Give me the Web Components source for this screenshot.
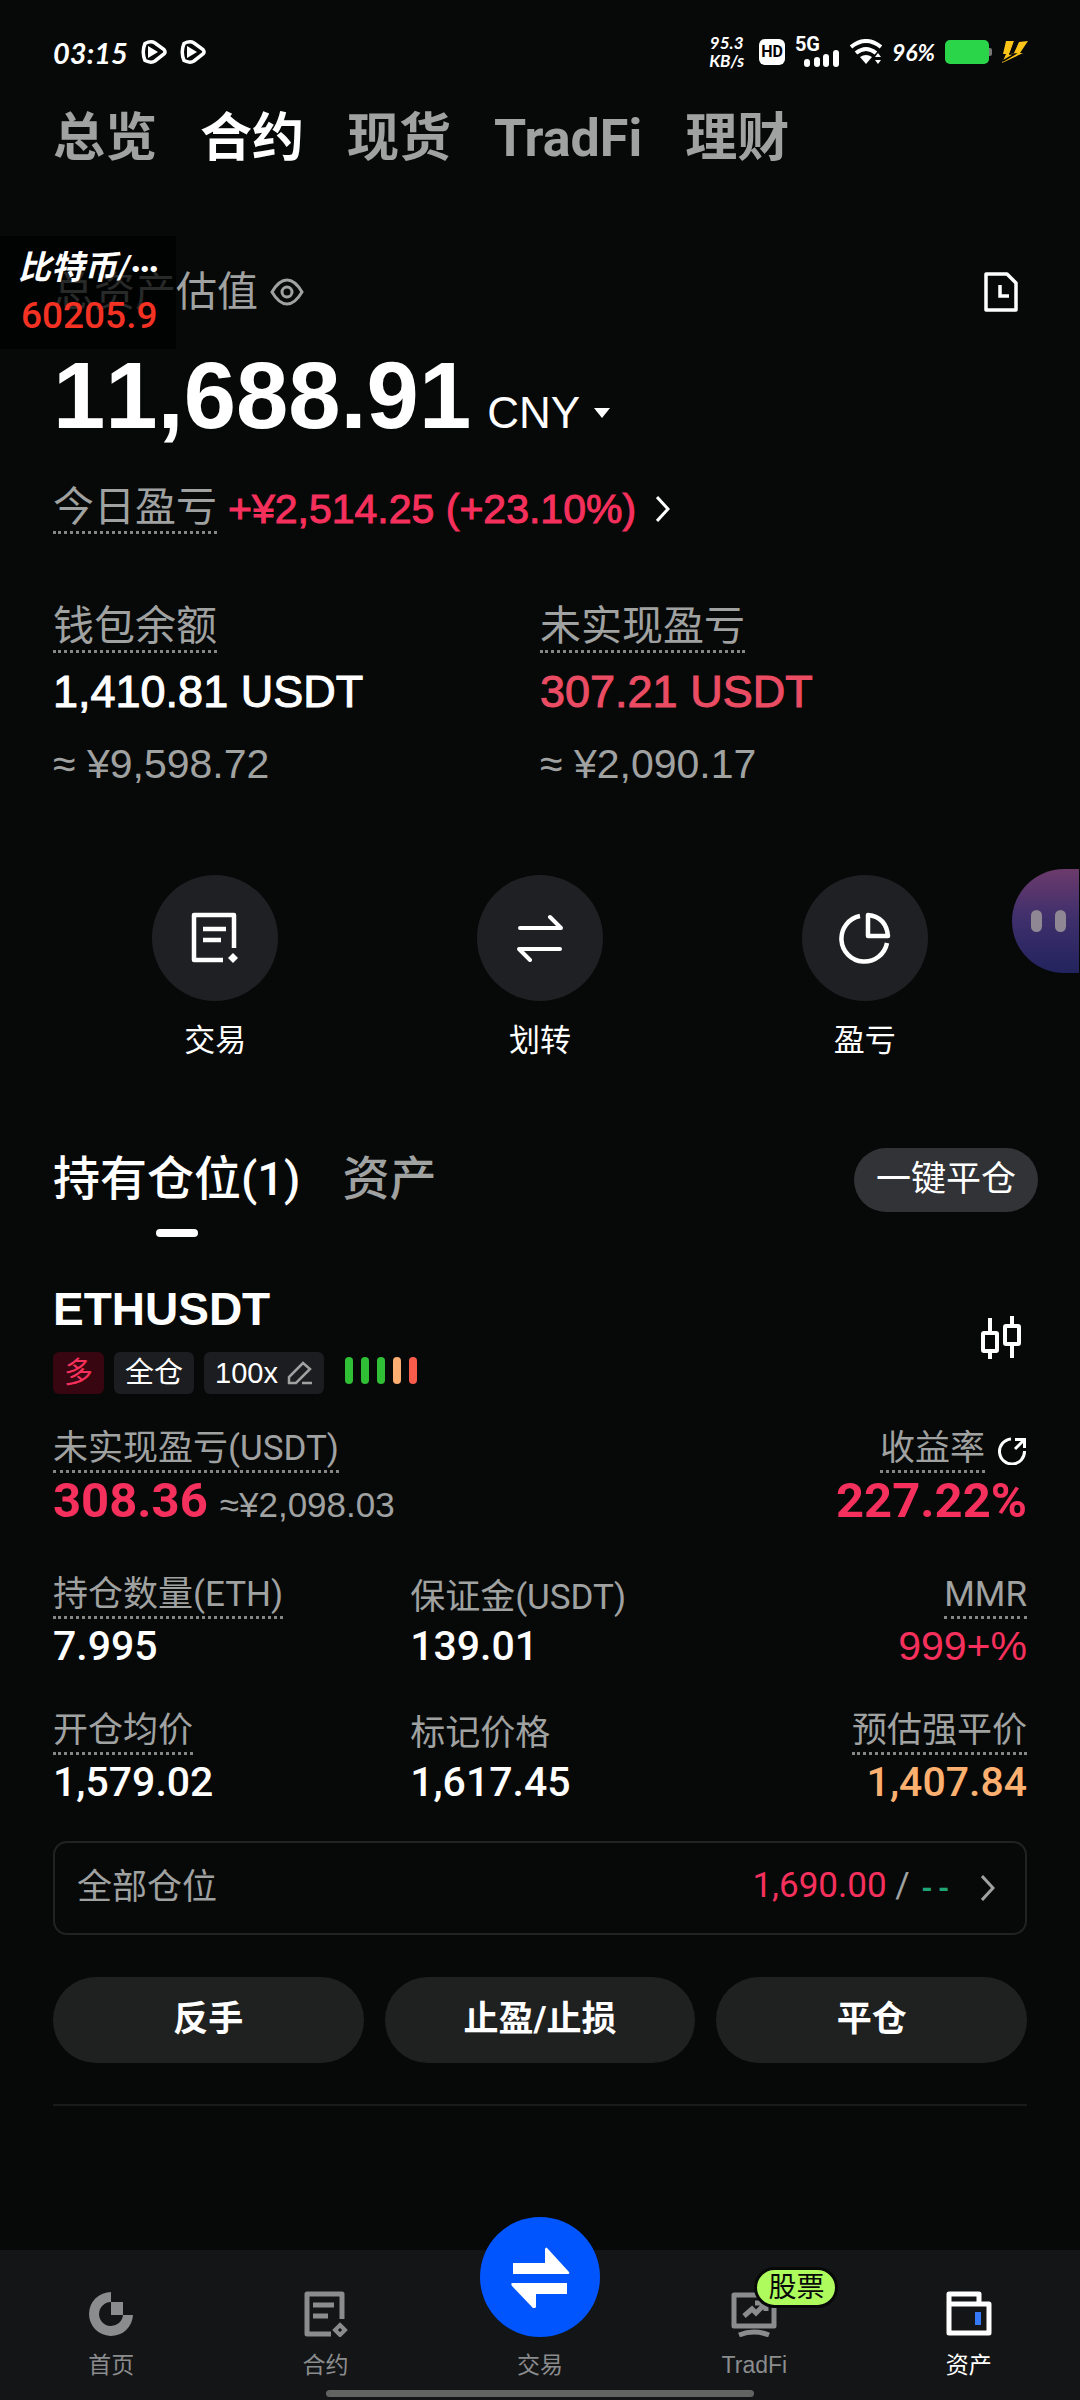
<!DOCTYPE html>
<html lang="zh-CN">
<head>
<meta charset="utf-8">
<meta name="viewport" content="width=device-width, initial-scale=1">
<title>合约资产</title>
<style>
  :root {
    --bg: #070908;
    --text: #fff;
    --muted: #a0a2a2;
    --red: #f6305c;
    --orange: #fbb070;
    --green: #20a577;
    --chip: #1c1d20;
    --gutter: 53px;
    --sans: "Liberation Sans", "Noto Sans CJK SC", sans-serif;
    --round: Roboto, "Noto Sans CJK SC", sans-serif;
    --hand: Lato, "Noto Sans CJK SC", sans-serif;
  }
  body {
    margin: 0;
    min-height: 100vh;
    display: flex;
    flex-direction: column;
    position: relative;
    overflow-x: hidden;
    background: var(--bg);
    color: var(--text);
    font-family: var(--sans);
  }
  main {
    padding: 0 var(--gutter);
  }
  bottom-nav {
    margin-top: auto;
  }
</style>
</head>
<body>
  <status-bar time="03:15" rate="95.3" battery="96%"></status-bar>
  <main>
    <account-tabs></account-tabs>
    <total-assets></total-assets>
    <wallet-balances>
      <balance-item label="钱包余额" value="1,410.81 USDT" approx="≈ ¥9,598.72"></balance-item>
      <balance-item label="未实现盈亏" value="307.21 USDT" approx="≈ ¥2,090.17" loss></balance-item>
    </wallet-balances>
    <quick-actions>
      <quick-action icon="order">交易</quick-action>
      <quick-action icon="transfer">划转</quick-action>
      <quick-action icon="pie">盈亏</quick-action>
    </quick-actions>
    <position-header></position-header>
    <position-card></position-card>
  </main>
  <bottom-nav>
    <nav-item icon="home">首页</nav-item>
    <nav-item icon="contract">合约</nav-item>
    <nav-item icon="swap" primary>交易</nav-item>
    <nav-item icon="screen" badge="股票">TradFi</nav-item>
    <nav-item icon="wallet" active>资产</nav-item>
  </bottom-nav>
  <price-float></price-float>
  <float-ball></float-ball>

<script>
  const ICONS = {
    play: [26, 24, `<path d="M4 3.500Q10 .5 14 3L23 9.500Q25 12 23 14L14 21Q10 23.500 4 20.500Q.5 12 4 3.500Z" fill="none" stroke="currentColor" stroke-width="3.500"/><path d="M7 6 17 12 7 18Z" fill="currentColor"/>`],
    signal: [36, 18, `<g fill="currentColor"><rect y="9" width="6" height="8" rx="3"/><rect x="10" y="7" width="6" height="10" rx="3"/><rect x="19" y="4" width="6" height="13" rx="3"/><rect x="29" width="6" height="17" rx="3"/></g>`],
    wifi: [32, 26, `<g fill="none" stroke="currentColor" stroke-width="4"><path d="M1 8Q16-4 31 8"/><path d="M6 14Q16 6 26 14"/></g><path d="M10 18Q16 14 22 18L16 25Z" fill="currentColor"/><path d="M28 14l3 4h-6zM28 25l3-4h-6z" fill="currentColor"/>`],
    battery: [47, 24, `<path d="M44 8h1q2 0 2 2v4q0 2-2 2h-1z" fill="#777"/><rect width="44" height="24" rx="5" fill="#2bd54a"/>`],
    bolt: [26, 22, `<path d="M4 0h8L8 12h4L17 1l9-1-8 12h3L0 22 4 13H1z" fill="#fcc419"/><path d="M1 20 13 13H7M13 0 8 13" stroke="#070908" stroke-width="1.500" fill="none"/>`],
    eye: [34, 28, `<g fill="none" stroke="currentColor" stroke-width="3"><path d="M2 14Q9 2 17 2T32 14Q25 26 17 26T2 14Z"/><circle cx="17" cy="14" r="5"/></g>`],
    history: [36, 40, `<g fill="none" stroke="currentColor" stroke-width="3.500"><path d="M3 2H24L33 11V38H3Z" stroke-linejoin="round"/><path d="M17 13V24H26"/></g>`],
    caret: [16, 10, `<path d="M0 0H16L8 10Z" fill="currentColor"/>`],
    chevron: [14, 26, `<path d="M1 1 12 13 1 25" fill="none" stroke="currentColor" stroke-width="3"/>`],
    order: [50, 52, `<path d="M33 48H4V3H44V36" fill="none" stroke="currentColor" stroke-width="4.500" stroke-linejoin="round"/><path d="M13 17H36M13 28H31" stroke="currentColor" stroke-width="4.500"/><path d="M43 41 48 46 43 51 38 46Z" fill="currentColor"/>`],
    transfer: [48, 48, `<path d="M4 14H45L34 3M44 35H3L14 46" fill="none" stroke="currentColor" stroke-width="4" stroke-linecap="round" stroke-linejoin="round"/>`],
    pie: [52, 52, `<g fill="none" stroke="currentColor" stroke-width="4.500"><path d="M21 4A23 23 0 1 0 48 31"/><path d="M29 3V24H49Q47 5 29 3Z" stroke-linejoin="round"/></g>`],
    pencil: [26, 26, `<path d="M2 23V17L16 3 23 9 9 23ZM15 23H25" fill="none" stroke="currentColor" stroke-width="2.500"/>`],
    candles: [40, 44, `<g fill="none" stroke="currentColor" stroke-width="4"><rect x="2" y="17" width="14" height="18" rx="1"/><rect x="24" y="10" width="14" height="18" rx="1"/><path d="M9 2V17M9 35V43M31 0V10M31 28V42"/></g>`],
    share: [30, 28, `<g fill="none" stroke="currentColor" stroke-width="3"><path d="M14 2A12.500 12.500 0 1 0 27.500 14"/><path d="M18 12 27 3M18 2.500H27.500V11"/></g>`],
    home: [46, 46, `<path d="M23 1A22 22 0 1 0 45 24H35A12 12 0 1 1 23 11Z" fill="currentColor"/><rect x="23" y="11" width="12" height="13" fill="currentColor"/>`],
    contract: [46, 46, `<path d="M28 43H4V3H39V28" fill="none" stroke="currentColor" stroke-width="5" stroke-linejoin="round"/><path d="M10 14H31M10 25H25" stroke="currentColor" stroke-width="5"/><path d="M37 34 42 39 37 44 32 39Z" fill="none" stroke="currentColor" stroke-width="4"/>`],
    swap: [62, 62, `<path d="M4 17H36V3Q37 0 39 3L60 26Q61 28 59 28H4ZM58 48H27V61Q25 64 23 61L3 40Q1 37 4 37H58Z" fill="#fff"/>`],
    screen: [46, 46, `<g fill="none" stroke="currentColor"><path d="M3 4H43V35H3Z" stroke-width="5" stroke-linejoin="round"/><path d="M13 25 21 18 25 22 35 12M24 12H35V20" stroke-width="5"/><path d="M8 44Q23 38 38 44" stroke-width="5"/></g>`],
    wallet: [46, 46, `<path d="M3 14V3H33V13M3 13H43V42H3Z" fill="none" stroke="currentColor" stroke-width="5" stroke-linejoin="round"/><rect x="29" y="21" width="6" height="13" fill="#3579f6"/>`]
  };

  // Shared by every element: fills an open shadow root and resets controls
  class BaseElement extends HTMLElement {
    constructor() {
      super();
      this._root = this.attachShadow({ mode: 'open' });
    }

    connectedCallback() {
      this._root.innerHTML = `
        <style>
          * { box-sizing: border-box; }
          :host { display: block; box-sizing: border-box; }
          button, a {
            margin: 0;
            padding: 0;
            border: 0;
            background: none;
            color: inherit;
            font: inherit;
            text-decoration: none;
            cursor: pointer;
          }
          h2, p { margin: 0; font-weight: inherit; }
          .dotted { border-bottom: 3px dotted #858787; }
        </style>
        ${this.render()}
      `;
    }

    attr(name) {
      return this.getAttribute(name) || '';
    }
  }

  class AppIcon extends BaseElement {
    render() {
      const [w, h, shape] = ICONS[this.attr('name')];
      return `
        <style>
          :host { flex: none; width: ${w}px; height: ${h}px; }
          svg { display: block; }
        </style>
        <svg width="${w}" height="${h}" viewBox="0 0 ${w} ${h}" aria-hidden="true">${shape}</svg>
      `;
    }
  }

  class StatusBar extends BaseElement {
    render() {
      return `
        <style>
          :host {
            display: flex;
            align-items: center;
            justify-content: space-between;
            height: 104px;
            padding: 0 52px 0 var(--gutter);
            font-family: var(--hand);
            font-weight: 700;
            font-style: italic;
          }
          .side { display: flex; align-items: center; }
          .left { gap: 13px; font-size: 29px; }
          .right { gap: 10px; font-size: 23px; }
          .rate {
            margin-right: 5px;
            font-size: 17px;
            line-height: 18px;
            text-align: center;
          }
          .hd {
            padding: 0 2px;
            border-radius: 6px;
            background: #fff;
            color: #000;
            font: 700 16px/26px var(--round);
          }
          .cell { display: grid; }
          .cell span { font: 700 20px/16px var(--round); }
          .cell app-icon { margin: -2px 0 0 9px; }
        </style>
        <div class="side left">
          <span>${this.attr('time')}</span>
          <app-icon name="play"></app-icon>
          <app-icon name="play"></app-icon>
        </div>
        <div class="side right">
          <div class="rate">${this.attr('rate')}<br>KB/s</div>
          <span class="hd">HD</span>
          <div class="cell"><span>5G</span><app-icon name="signal"></app-icon></div>
          <app-icon name="wifi"></app-icon>
          <span>${this.attr('battery')}</span>
          <app-icon name="battery"></app-icon>
          <app-icon name="bolt"></app-icon>
        </div>
      `;
    }
  }

  class AccountTabs extends BaseElement {
    render() {
      return `
        <style>
          nav {
            display: flex;
            gap: 43px;
            color: var(--muted);
            font-family: var(--round);
            font-size: 52px;
            font-weight: 700;
            line-height: 70px;
          }
          .active { color: var(--text); }
        </style>
        <nav>
          <a href="#overview">总览</a>
          <a href="#futures" class="active">合约</a>
          <a href="#spot">现货</a>
          <a href="#tradfi">TradFi</a>
          <a href="#earn">理财</a>
        </nav>
      `;
    }
  }

  class TotalAssets extends BaseElement {
    render() {
      return `
        <style>
          :host { margin-top: 94px; font-size: 41px; line-height: 48px; }
          .row { display: flex; align-items: center; }
          .head { gap: 12px; color: var(--muted); }
          .head button:last-child { margin: 0 8px 0 auto; color: var(--text); }
          .amount {
            display: flex;
            align-items: baseline;
            gap: 16px;
            margin-top: 30px;
          }
          .total {
            font-size: 94px;
            font-weight: 700;
            font-kerning: none;
            line-height: 100px;
          }
          .unit {
            display: flex;
            align-items: center;
            gap: 14px;
            font-size: 44px;
          }
          .today { gap: 11px; margin-top: 37px; }
          .today .dotted { color: var(--muted); }
          .pnl {
            display: flex;
            align-items: center;
            gap: 20px;
            color: var(--red);
            -webkit-text-stroke: 1px currentColor;
          }
          .pnl app-icon { color: var(--text); }
        </style>
        <div class="row head">
          <span>总资产估值</span>
          <button aria-label="隐藏金额"><app-icon name="eye"></app-icon></button>
          <button aria-label="历史记录"><app-icon name="history"></app-icon></button>
        </div>
        <div class="amount">
          <span class="total">11,688.91</span>
          <button class="unit">CNY<app-icon name="caret"></app-icon></button>
        </div>
        <div class="row today">
          <span class="dotted">今日盈亏</span>
          <a href="#pnl" class="pnl">+¥2,514.25 (+23.10%)<app-icon name="chevron"></app-icon></a>
        </div>
      `;
    }
  }

  class WalletBalances extends BaseElement {
    render() {
      return `
        <style>
          :host { display: grid; grid-template-columns: 1fr 1fr; margin-top: 68px; }
        </style>
        <slot></slot>
      `;
    }
  }

  class BalanceItem extends BaseElement {
    render() {
      return `
        <style>
          :host { font-size: 41px; line-height: 48px; color: var(--muted); }
          .label { display: inline-block; vertical-align: top; }
          .value {
            margin: 11px 0 20px;
            color: var(--text);
            font-size: 45px;
            line-height: 56px;
            -webkit-text-stroke: 1px currentColor;
          }
          :host([loss]) .value { color: #ea4c64; }
        </style>
        <span class="label dotted">${this.attr('label')}</span>
        <p class="value">${this.attr('value')}</p>
        <p>${this.attr('approx')}</p>
      `;
    }
  }

  class QuickActions extends BaseElement {
    render() {
      return `
        <style>
          :host { display: grid; grid-template-columns: repeat(3, 1fr); margin-top: 87px; }
        </style>
        <slot></slot>
      `;
    }
  }

  class QuickAction extends BaseElement {
    render() {
      return `
        <style>
          button {
            display: grid;
            justify-items: center;
            gap: 18px;
            width: 100%;
            font-size: 31px;
            line-height: 44px;
          }
          .circle {
            display: grid;
            place-items: center;
            width: 126px;
            height: 126px;
            border-radius: 50%;
            background: #1f2023;
          }
        </style>
        <button>
          <span class="circle"><app-icon name="${this.attr('icon')}"></app-icon></span>
          <slot></slot>
        </button>
      `;
    }
  }

  class PositionHeader extends BaseElement {
    render() {
      return `
        <style>
          :host {
            display: flex;
            align-items: flex-start;
            gap: 42px;
            margin: 85px -11px 0 0;
            font-family: var(--round);
            font-size: 47px;
            font-weight: 500;
            line-height: 56px;
          }
          a { padding-top: 3px; color: var(--muted); }
          .active { color: var(--text); }
          .active::after {
            content: "";
            display: block;
            width: 42px;
            height: 8px;
            margin: 22px auto 0;
            border-radius: 4px;
            background: var(--text);
          }
          button {
            margin-left: auto;
            padding: 0 22px;
            border-radius: 32px;
            background: #323337;
            font-size: 35px;
            font-weight: 400;
            line-height: 64px;
          }
        </style>
        <a href="#positions" class="active">持有仓位(1)</a>
        <a href="#assets">资产</a>
        <button>一键平仓</button>
      `;
    }
  }

  class StatCell extends BaseElement {
    render() {
      const dotted = this.hasAttribute('plain') ? '' : 'dotted';
      return `
        <style>
          :host {
            display: flex;
            flex-direction: column;
            align-items: flex-start;
            justify-content: flex-end;
            gap: 3px;
          }
          :host([end]) { align-items: flex-end; }
          .label { color: var(--muted); font-size: 35px; line-height: 42px; }
          .value { font-size: 41px; font-weight: 500; line-height: 48px; }
          :host([tone="red"]) .value { color: var(--red); font-family: var(--sans); }
          :host([tone="orange"]) .value { color: var(--orange); }
        </style>
        <span class="label ${dotted}">${this.attr('label')}</span>
        <span class="value"><slot></slot></span>
      `;
    }
  }

  class PositionCard extends BaseElement {
    render() {
      return `
        <style>
          :host {
            margin-top: 44px;
            padding-bottom: 41px;
            border-bottom: 2px solid #191b1a;
            font-family: var(--round);
            font-size: 35px;
            line-height: 42px;
          }
          .row { display: flex; align-items: center; justify-content: space-between; }
          h2 { font: 700 46px/56px var(--sans); }
          .chart { margin-right: 6px; }
          .tags { display: flex; gap: 10px; margin-top: 15px; font: 29px/42px var(--sans); }
          .tag {
            display: flex;
            align-items: center;
            gap: 9px;
            padding: 0 11px;
            border-radius: 6px;
            background: var(--chip);
          }
          .tag app-icon { color: var(--muted); }
          .long { background: #370610; color: var(--red); }
          .risk { display: flex; gap: 8px; margin: 5px 0 0 11px; }
          .risk i { width: 8px; height: 27px; border-radius: 4px; background: #2fc035; }
          .risk i:nth-child(4) { background: #fdae70; }
          .risk i:nth-child(5) { background: #f95c4b; }
          .labels { margin-top: 34px; color: var(--muted); }
          .roi { display: flex; align-items: center; gap: 12px; }
          .roi button { color: var(--text); }
          .results { align-items: baseline; line-height: 56px; }
          .results b { color: var(--red); font-size: 49px; }
          .results span { margin-left: 12px; color: var(--muted); font-family: var(--sans); }
          .stats {
            display: grid;
            grid-template-columns: 11fr 10fr 9fr;
            row-gap: 40px;
            margin-top: 40px;
          }
          .all {
            display: flex;
            align-items: center;
            width: 100%;
            height: 94px;
            margin-top: 35px;
            padding: 0 30px 0 22px;
            border: 2px solid #202322;
            border-radius: 14px;
            color: var(--muted);
          }
          .all .sizes { margin-left: auto; white-space: pre; }
          .sizes .sell { color: var(--red); }
          .sizes .buy { color: var(--green); font: 700 28px/42px "Liberation Mono", monospace; }
          .all app-icon { margin-left: 29px; }
          .buttons {
            display: grid;
            grid-template-columns: repeat(3, 1fr);
            gap: 21px;
            margin-top: 42px;
          }
          .buttons button {
            height: 86px;
            border-radius: 43px;
            background: #1f2120;
            font-weight: 700;
          }
        </style>
        <div class="row">
          <div>
            <h2>ETHUSDT</h2>
            <div class="tags">
              <span class="tag long">多</span>
              <span class="tag">全仓</span>
              <button class="tag">100x<app-icon name="pencil"></app-icon></button>
              <div class="risk"><i></i><i></i><i></i><i></i><i></i></div>
            </div>
          </div>
          <button class="chart" aria-label="K线"><app-icon name="candles"></app-icon></button>
        </div>
        <div class="row labels">
          <span class="dotted">未实现盈亏(USDT)</span>
          <span class="roi">
            <span class="dotted">收益率</span>
            <button aria-label="分享"><app-icon name="share"></app-icon></button>
          </span>
        </div>
        <div class="row results">
          <div><b>308.36</b><span>≈¥2,098.03</span></div>
          <b>227.22%</b>
        </div>
        <div class="stats">
          <stat-cell label="持仓数量(ETH)">7.995</stat-cell>
          <stat-cell label="保证金(USDT)" plain>139.01</stat-cell>
          <stat-cell label="MMR" tone="red" end>999+%</stat-cell>
          <stat-cell label="开仓均价">1,579.02</stat-cell>
          <stat-cell label="标记价格" plain>1,617.45</stat-cell>
          <stat-cell label="预估强平价" tone="orange" end>1,407.84</stat-cell>
        </div>
        <button class="all">
          <span>全部仓位</span>
          <span class="sizes"><span class="sell">1,690.00</span> / <span class="buy">--</span></span>
          <app-icon name="chevron"></app-icon>
        </button>
        <div class="buttons">
          <button>反手</button>
          <button>止盈/止损</button>
          <button>平仓</button>
        </div>
      `;
    }
  }

  class BottomNav extends BaseElement {
    render() {
      return `
        <style>
          :host { padding: 0 4px 3px; background: #141517; }
          nav {
            display: grid;
            grid-template-columns: repeat(5, 1fr);
            grid-auto-rows: 140px;
          }
          .handle {
            width: 40%;
            height: 7px;
            margin: 0 auto;
            border-radius: 4px;
            background: #626462;
          }
        </style>
        <nav><slot></slot></nav>
        <div class="handle"></div>
      `;
    }
  }

  class NavItem extends BaseElement {
    render() {
      const badge = this.attr('badge');
      return `
        <style>
          a {
            display: flex;
            flex-direction: column;
            align-items: center;
            justify-content: flex-end;
            gap: 13px;
            height: 100%;
            padding-bottom: 10px;
            color: #8a8c8e;
            font-size: 23px;
            line-height: 30px;
          }
          :host([active]) a { color: var(--text); }
          .icon { position: relative; }
          :host([primary]) .icon {
            display: grid;
            flex: none;
            place-items: center;
            width: 120px;
            height: 120px;
            border-radius: 50%;
            background: #0055ff;
          }
          .badge {
            position: absolute;
            left: 23px;
            top: -24px;
            padding: 0 11px;
            border: 3px solid #070908;
            border-radius: 21px;
            background: #adfb5d;
            color: #070908;
            font-size: 28px;
            line-height: 35px;
            white-space: nowrap;
          }
        </style>
        <a href="#${this.attr('icon')}">
          <span class="icon">
            <app-icon name="${this.attr('icon')}"></app-icon>
            ${badge ? `<span class="badge">${badge}</span>` : ''}
          </span>
          <slot></slot>
        </a>
      `;
    }
  }

  // Ticker window that floats above the page
  class PriceFloat extends BaseElement {
    render() {
      return `
        <style>
          :host {
            position: absolute;
            left: 0;
            top: 236px;
            width: 176px;
            height: 113px;
            padding: 8px 0 0 18px;
            background: rgba(0, 0, 0, 0.75);
          }
          .pair { font: italic 700 33px/44px var(--hand); white-space: nowrap; }
          .price {
            padding-left: 3px;
            color: #f43224;
            font: 500 37px/56px var(--round);
          }
        </style>
        <p class="pair">比特币/···</p>
        <p class="price">60205.9</p>
      `;
    }
  }

  class FloatBall extends BaseElement {
    render() {
      return `
        <style>
          :host {
            position: absolute;
            right: 1px;
            top: 869px;
            display: flex;
            align-items: center;
            gap: 13px;
            width: 67px;
            height: 104px;
            padding-left: 19px;
            border-radius: 52px 0 0 52px;
            background: linear-gradient(#6c3a6c, #40306c 45%, #22235e);
          }
          i { width: 11px; height: 22px; border-radius: 6px; background: #8f8794; }
        </style>
        <i></i><i></i>
      `;
    }
  }

  customElements.define('app-icon', AppIcon);
  customElements.define('status-bar', StatusBar);
  customElements.define('account-tabs', AccountTabs);
  customElements.define('total-assets', TotalAssets);
  customElements.define('wallet-balances', WalletBalances);
  customElements.define('balance-item', BalanceItem);
  customElements.define('quick-actions', QuickActions);
  customElements.define('quick-action', QuickAction);
  customElements.define('position-header', PositionHeader);
  customElements.define('stat-cell', StatCell);
  customElements.define('position-card', PositionCard);
  customElements.define('bottom-nav', BottomNav);
  customElements.define('nav-item', NavItem);
  customElements.define('price-float', PriceFloat);
  customElements.define('float-ball', FloatBall);
</script>
</body>
</html>
